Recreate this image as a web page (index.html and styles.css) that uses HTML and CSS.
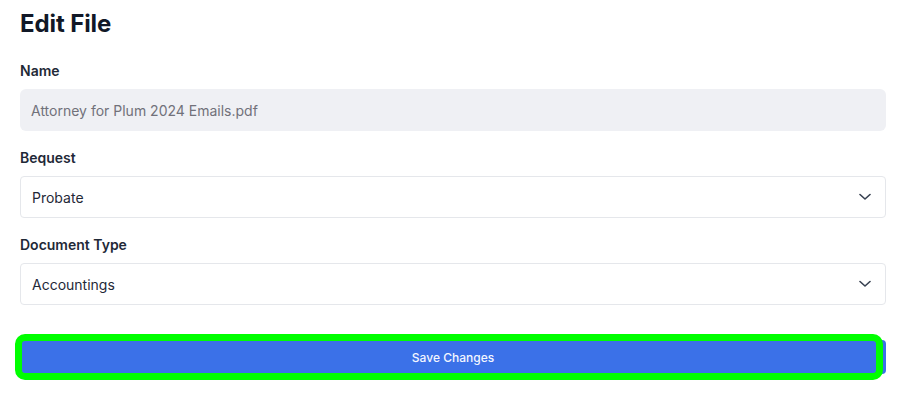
FILE: index.html
```html
<!DOCTYPE html>
<html lang="en">
<head>
<meta charset="utf-8">
<title>Edit File</title>
<link rel="stylesheet" href="styles.css">
</head>
<body>
<div class="page">
  <h1 class="title">Edit File</h1>
  <form class="form">
    <div class="field">
      <label class="label">Name</label>
      <div class="input input-disabled">Attorney for Plum 2024 Emails.pdf</div>
    </div>
    <div class="field">
      <label class="label">Bequest</label>
      <div class="input select">
        <span>Probate</span>
        <svg class="chevron" width="12" height="8" viewBox="0 0 12 8"><path d="M1 1.5 L6 6 L11 1.5" fill="none" stroke="#374151" stroke-width="1.6" stroke-linecap="round" stroke-linejoin="round"/></svg>
      </div>
    </div>
    <div class="field">
      <label class="label">Document Type</label>
      <div class="input select">
        <span>Accountings</span>
        <svg class="chevron" width="12" height="8" viewBox="0 0 12 8"><path d="M1 1.5 L6 6 L11 1.5" fill="none" stroke="#374151" stroke-width="1.6" stroke-linecap="round" stroke-linejoin="round"/></svg>
      </div>
    </div>
    <div class="actions">
      <button type="button" class="btn">Save Changes</button>
      <div class="highlight"></div>
    </div>
  </form>
</div>
</body>
</html>
```

FILE: styles.css
```css
* { box-sizing: border-box; }
html, body { margin: 0; padding: 0; background: #ffffff; }
body {
  font-family: Inter, "Noto Sans", "Liberation Sans", sans-serif;
  color: #111827;
}
.page {
  padding: 8px 12px 20px 20px;
}
.title {
  margin: 0;
  font-size: 24px;
  line-height: 32px;
  font-weight: 700;
  color: #111827;
  letter-spacing: -0.1px;
}
.form {
  margin-top: 21px;
  display: flex;
  flex-direction: column;
  gap: 17px;
}
.field {
  display: flex;
  flex-direction: column;
  gap: 8px;
}
.label {
  font-size: 14px;
  line-height: 20px;
  font-weight: 600;
  color: #1f2937;
}
.input {
  height: 42px;
  display: flex;
  align-items: center;
  padding: 0 11px;
  font-size: 14px;
  border-radius: 4px;
}
.input-disabled {
  background: #eff0f4;
  color: #71717a;
  border-radius: 6px;
}
.select {
  border: 1px solid #e5e7eb;
  justify-content: space-between;
  color: #1f2937;
  padding: 0 14px 0 11px;
}
.chevron { display: block; }
.actions {
  position: relative;
  margin-top: 18px;
}
.btn {
  display: block;
  width: 100%;
  height: 34px;
  border: none;
  border-radius: 4px;
  background: #3b71e8;
  color: #f3f6ff;
  font-family: Inter, "Noto Sans", "Liberation Sans", sans-serif;
  font-size: 12px;
  font-weight: 500;
}
.highlight {
  position: absolute;
  left: -5px;
  top: -6px;
  width: 868px;
  height: 46px;
  border: 7px solid #00ff00;
  border-radius: 10px;
  pointer-events: none;
}
```
